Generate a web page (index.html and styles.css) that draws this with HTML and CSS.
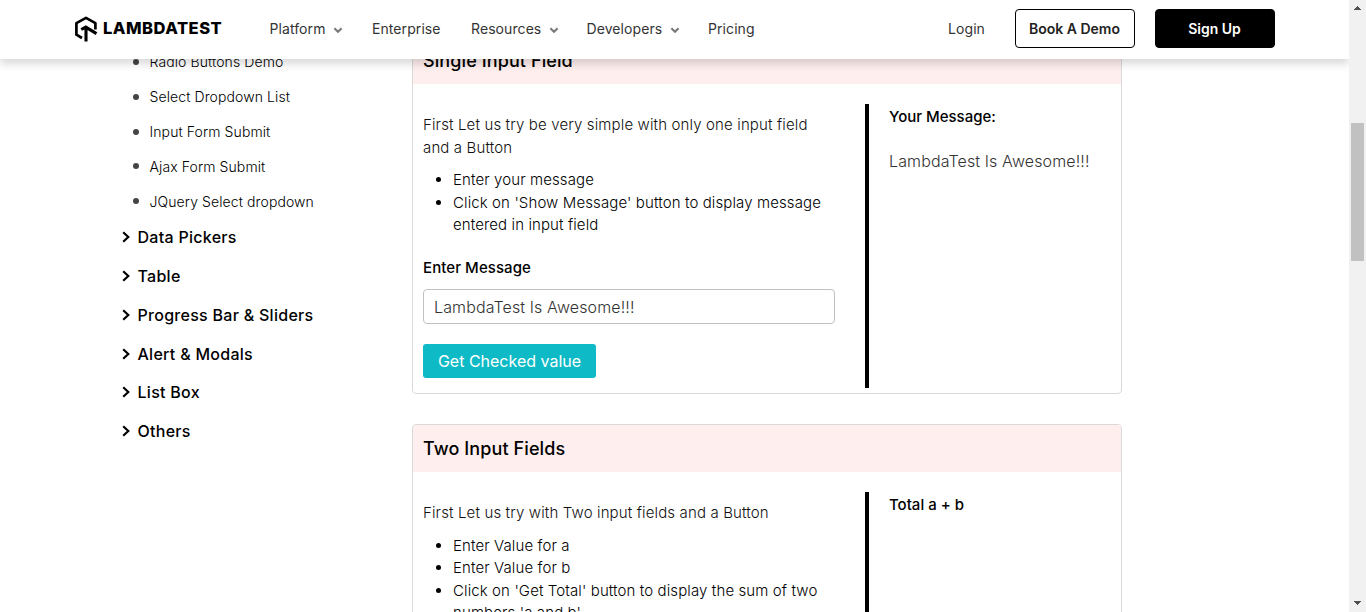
FILE: index.html
```html
<!DOCTYPE html>
<html lang="en">
<head>
<meta charset="utf-8">
<title>Simple Form Demo | LambdaTest</title>
<link rel="stylesheet" href="styles.css">
</head>
<body>
<div class="page">
  <header class="header">
    <a class="logo">
      <svg class="logo-mark" viewBox="0 0 24 26" width="24" height="26"><path d="M8 22 2.4 18.7V7.1L12 1.9 21.4 7.1v6.4" fill="none" stroke="#000" stroke-width="2.7" stroke-linejoin="round"/><path d="M7.2 13.5 11.8 11.1 22.5 17.6M12 11.7V25.6" fill="none" stroke="#000" stroke-width="3.1"/></svg>
      <span class="logo-text">LAMBDATEST</span>
    </a>
    <nav class="nav">
      <a class="platform">Platform<svg class="caret" viewBox="0 0 10 7"><path d="M1.4 1.2 5 4.8 8.6 1.2"/></svg></a>
      <a class="enterprise">Enterprise</a>
      <a class="resources">Resources<svg class="caret" viewBox="0 0 10 7"><path d="M1.4 1.2 5 4.8 8.6 1.2"/></svg></a>
      <a class="developers">Developers<svg class="caret" viewBox="0 0 10 7"><path d="M1.4 1.2 5 4.8 8.6 1.2"/></svg></a>
      <a class="pricing">Pricing</a>
    </nav>
    <div class="actions">
      <a class="login">Login</a>
      <a class="btn outline">Book A Demo</a>
      <a class="btn solid">Sign Up</a>
    </div>
  </header>
  <main class="main">
    <aside class="sidebar">
      <ul class="links">
        <li><span>Radio Buttons Demo</span></li>
        <li><span>Select Dropdown List</span></li>
        <li><span>Input Form Submit</span></li>
        <li><span>Ajax Form Submit</span></li>
        <li><span>JQuery Select dropdown</span></li>
      </ul>
      <div class="groups">
        <div class="group"><svg class="chev" viewBox="0 0 8 12"><path d="M1.2 1.2 6.3 6 1.2 10.8"/></svg><span>Data Pickers</span></div>
        <div class="group"><svg class="chev" viewBox="0 0 8 12"><path d="M1.2 1.2 6.3 6 1.2 10.8"/></svg><span>Table</span></div>
        <div class="group"><svg class="chev" viewBox="0 0 8 12"><path d="M1.2 1.2 6.3 6 1.2 10.8"/></svg><span>Progress Bar &amp; Sliders</span></div>
        <div class="group"><svg class="chev" viewBox="0 0 8 12"><path d="M1.2 1.2 6.3 6 1.2 10.8"/></svg><span>Alert &amp; Modals</span></div>
        <div class="group"><svg class="chev" viewBox="0 0 8 12"><path d="M1.2 1.2 6.3 6 1.2 10.8"/></svg><span>List Box</span></div>
        <div class="group"><svg class="chev" viewBox="0 0 8 12"><path d="M1.2 1.2 6.3 6 1.2 10.8"/></svg><span>Others</span></div>
      </div>
    </aside>
    <div class="cards">
      <section class="card">
        <h2 class="card-title">Single Input Field</h2>
        <div class="card-body">
          <div class="form">
            <p class="intro">First Let us try be very simple with only one input field and a Button</p>
            <ul class="steps">
              <li>Enter your message</li>
              <li>Click on 'Show Message' button to display message entered in input field</li>
            </ul>
            <label class="label" for="message">Enter Message</label>
            <input class="field" id="message" type="text" value="LambdaTest Is Awesome!!!">
            <button class="submit" type="button">Get Checked value</button>
          </div>
          <div class="result">
            <h3 class="result-title">Your Message:</h3>
            <p class="result-value">LambdaTest Is Awesome!!!</p>
          </div>
        </div>
      </section>
      <section class="card">
        <h2 class="card-title">Two Input Fields</h2>
        <div class="card-body">
          <div class="form">
            <p class="intro">First Let us try with Two input fields and a Button</p>
            <ul class="steps">
              <li>Enter Value for a</li>
              <li>Enter Value for b</li>
              <li>Click on 'Get Total' button to display the sum of two numbers 'a and b'</li>
            </ul>
          </div>
          <div class="result">
            <h3 class="result-title">Total a + b</h3>
          </div>
        </div>
      </section>
    </div>
  </main>
</div>
<div class="scrollbar">
  <svg viewBox="0 0 7 4" width="7" height="4"><path d="M3 0h1v1h1v1h1v1h1v1H0V3h1V2h1V1h1z" fill="#505050"/></svg>
  <div class="track"><div class="thumb"></div></div>
  <svg viewBox="0 0 7 4" width="7" height="4"><path d="M0 0h7v1H6v1H5v1H4v1H3V3H2V2H1V1H0z" fill="#505050"/></svg>
</div>
</body>
</html>
```
FILE: styles.css
```css
* { box-sizing: border-box; }
body {
  margin: 0;
  height: 612px;
  display: grid;
  grid-template-columns: 1349px 17px;
  overflow: hidden;
  font-family: Inter, "Liberation Sans", sans-serif;
  color: #000;
  background: #fff;
}
h2, h3, p, ul { margin: 0; padding: 0; }
.page { height: 612px; overflow: hidden; }

.header {
  position: relative;
  z-index: 2;
  display: flex;
  align-items: center;
  height: 59px;
  padding: 0 74px 2px;
  background: #fff;
  box-shadow: 0 5px 8px rgba(0, 0, 0, .15);
}
.logo { display: flex; align-items: center; gap: 5px; width: 195.5px; white-space: nowrap; }
.logo-mark { flex: none; }
.logo-text { font-size: 16.5px; font-weight: 800; line-height: 20px; letter-spacing: .5px; transform: translateY(-1px); }
.nav { display: flex; font-size: 14px; line-height: 20px; color: #333; letter-spacing: .08px; }
.nav a { display: flex; align-items: center; white-space: nowrap; }
.platform { width: 102.5px; }
.enterprise { width: 99px; }
.resources { width: 115.5px; }
.developers { width: 121.5px; }
.caret { width: 10px; height: 7px; margin: 3px 0 0 7.5px; fill: none; stroke: #777; stroke-width: 2; }
.actions { display: flex; align-items: center; margin-left: auto; font-size: 14px; color: #333; }
.login { margin-right: 30px; letter-spacing: .1px; }
.btn {
  display: flex;
  align-items: center;
  justify-content: center;
  width: 120px;
  height: 39px;
  padding-right: 1px;
  border: 1px solid #000;
  border-radius: 4px;
  font-weight: 600;
}
.outline { margin-right: 20px; color: #222; }
.solid { background: #000; color: #fff; }

.main { display: flex; margin-top: -23px; }
.sidebar { width: 412px; padding: 8.6px 0 0 122px; }
.links { list-style: none; letter-spacing: .1px; }
.links li { display: flex; align-items: center; gap: 11px; height: 34.8px; padding-left: 10.5px; font-size: 14px; font-weight: 300; }
.links li::before { content: ""; width: 6px; height: 6px; border-radius: 50%; background: #444; }
.groups { margin-top: -1px; }
.group { display: flex; align-items: center; gap: 7.5px; height: 38.85px; font-size: 16px; font-weight: 500; letter-spacing: .28px; }
.chev { width: 8px; height: 12px; fill: none; stroke: #000; stroke-width: 2.2; }

.cards { display: flex; flex-direction: column; gap: 30px; width: 710px; }
.card { height: 358px; border: 1px solid #d9d9d9; border-radius: 4px; overflow: hidden; }
.card-title { height: 47px; padding: 0 10px; line-height: 47px; font-size: 18px; font-weight: 500; letter-spacing: .1px; background: #feeeed; }
.card-body { display: grid; grid-template-columns: 452px 1fr; height: 304px; padding-top: 20px; }
.form { padding: 10px 30px 0 10px; }
.intro { font-size: 15px; line-height: 22.5px; font-weight: 300; letter-spacing: .14px; color: #111; }
.steps { margin-top: 10px; padding-left: 30px; font-size: 15px; line-height: 22.5px; font-weight: 300; letter-spacing: .11px; }
.label { display: block; margin-top: 19px; font-size: 15px; line-height: 23px; font-weight: 500; letter-spacing: .08px; }
.field {
  display: block;
  width: 412px;
  height: 35px;
  margin-top: 10px;
  padding: 1px 10px 0;
  border: 1px solid #bfc1c4;
  border-radius: 4px;
  font: 300 16px Inter, "Liberation Sans", sans-serif;
  letter-spacing: .12px;
  color: #333;
}
.submit {
  width: 173px;
  height: 34px;
  margin-top: 20px;
  padding: 0;
  border: 0;
  border-radius: 3px;
  background: #0ebac5;
  color: #fff;
  font: 400 16px Inter, "Liberation Sans", sans-serif;
}
.result { height: 284px; padding: 2px 0 0 20px; border-left: 4px solid #000; }
.result-title { font-size: 15px; line-height: 22px; font-weight: 500; }
.result-value { margin-top: 21px; font-size: 16px; line-height: 24px; font-weight: 300; letter-spacing: .12px; color: #333; }

.scrollbar { display: flex; flex-direction: column; align-items: center; padding: 6px 0 7px; background: #f1f1f1; }
.track { flex: 1; padding-top: 113px; }
.thumb { width: 13px; height: 138px; background: #c1c1c1; }
```
